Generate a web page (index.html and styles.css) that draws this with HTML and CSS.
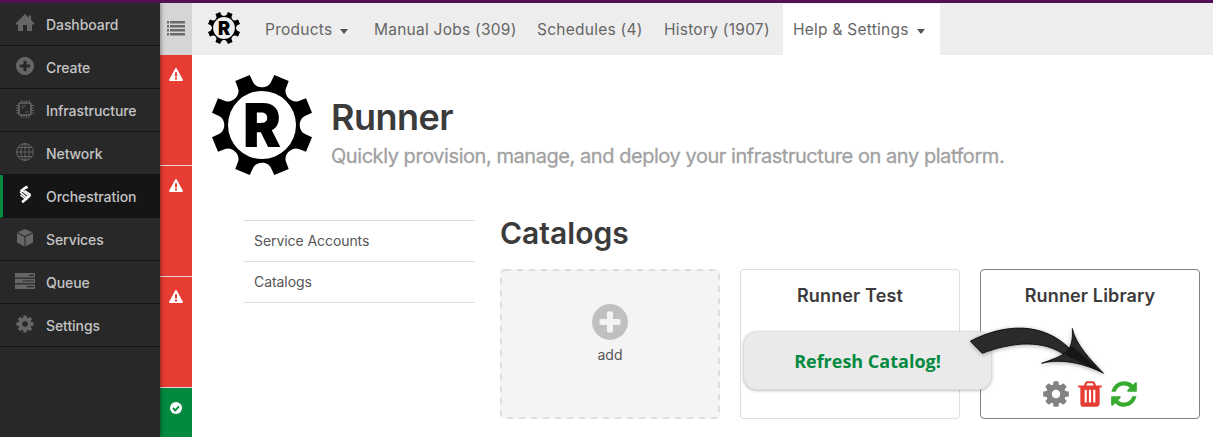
FILE: index.html
```html
<!DOCTYPE html>
<html lang="en">
<head>
<meta charset="utf-8">
<title>Runner</title>
<link rel="stylesheet" href="styles.css">
</head>
<body>
<svg class="defs" width="0" height="0">
  <symbol id="cog" viewBox="0 0 1792 1792"><path d="M1152 896q0-106-75-181t-181-75-181 75-75 181 75 181 181 75 181-75 75-181zm512-109v222q0 12-8 23t-20 13l-185 28q-19 54-39 91 35 50 107 138 10 12 10 25t-9 23q-27 37-99 108t-94 71q-12 0-26-9l-138-108q-44 23-91 38-16 136-29 186-7 28-36 28h-222q-14 0-24.5-8.5t-11.5-21.5l-28-184q-49-16-90-37l-141 107q-10 9-25 9-14 0-25-11-126-114-165-168-7-10-7-23 0-12 8-23 15-21 51-66.500t54-70.500q-27-50-41-99l-183-27q-13-2-21-12.500t-8-23.500v-222q0-12 8-23t19-13l186-28q14-46 39-92-40-57-107-138-10-12-10-24 0-10 9-23 26-36 98.500-107.500t94.500-71.500q13 0 26 10l138 107q44-23 91-38 16-136 29-186 7-28 36-28h222q14 0 24.500 8.500t11.500 21.500l28 184q49 16 90 37l142-107q9-9 24-9 13 0 25 10 129 119 165 170 7 8 7 22 0 12-8 23-15 21-51 66.500t-54 70.500q26 50 41 98l183 28q13 2 21 12.500t8 23.500z"/></symbol>
  <symbol id="plus" viewBox="128 128 1536 1536"><path d="M1344 960v-128q0-26-19-45t-45-19h-256v-256q0-26-19-45t-45-19h-128q-26 0-45 19t-19 45v256h-256q-26 0-45 19t-19 45v128q0 26 19 45t45 19h256v256q0 26 19 45t45 19h128q26 0 45-19t19-45v-256h256q26 0 45-19t19-45zm320-64q0 209-103 385.500t-279.500 279.500-385.500 103-385.500-103-279.500-279.500-103-385.500 103-385.500 279.500-279.500 385.500-103 385.500 103 279.500 279.500 103 385.500z"/></symbol>
  <symbol id="warn" viewBox="0 0 14 13"><path fill-rule="evenodd" d="M6.200.5q.8-1 1.600 0L13.900 11.800q.3 1.200-.9 1.200H1q-1.200 0-.9-1.200zM6 4.200v4.300h2V4.200zM6 9.500v1.900h2V9.500z"/></symbol>
  <symbol id="gear" viewBox="-50 -50 100 100">
    <path fill-rule="evenodd" d="M-12.300-50L-9-43C-6-36 6-36 9-43L12.300-50L26.700-44L24-36.800C21.200-29.700 29.700-21.200 36.800-24L44-26.700L50-12.300L43-9C36-6 36 6 43 9L50 12.300L44 26.700L36.800 24C29.700 21.200 21.200 29.700 24 36.800L26.700 44L12.300 50L9 43C6 36-6 36-9 43L-12.300 50L-26.700 44L-24 36.800C-21.200 29.700-29.700 21.200-36.800 24L-44 26.700L-50 12.300L-43 9C-36 6-36-6-43-9L-50-12.300L-44-26.700L-36.800-24C-29.700-21.200-21.200-29.700-24-36.800L-26.700-44ZM-34 0A34 34 0 1 0 34 0A34 34 0 1 0-34 0Z"/>
  </symbol>
</svg>
<div class="topline"></div>
<div class="app">
  <nav class="sidebar">
    <a class="side-item"><svg class="side-icon" viewBox="0 0 20 20"><path d="M10 1l3.700 3.700V2.500H16V7l3.500 3.500-.8.900H17V18h-5v-6H8v6H3v-6.600H1.300l-.8-.9z"/></svg>Dashboard</a>
    <a class="side-item"><svg class="side-icon" viewBox="-1 -1 20 20"><use href="#plus" width="18" height="18"/></svg>Create</a>
    <a class="side-item"><svg class="side-icon line" viewBox="0 0 20 20"><rect x="4" y="4" width="12" height="12" rx="1.500" stroke-width="1.600"/><path d="M6.500 1v3M9 1v3M11.500 1v3M14 1v3M6.500 16v3M9 16v3M11.500 16v3M14 16v3M1 6.500h3M1 9h3M1 11.500h3M1 14h3M16 6.500h3M16 9h3M16 11.500h3M16 14h3M6.500 7h4M6.500 9h2M10.500 13h3"/></svg>Infrastructure</a>
    <a class="side-item"><svg class="side-icon line" viewBox="0 0 20 20"><circle cx="10" cy="10" r="8.400"/><ellipse cx="10" cy="10" rx="4.200" ry="8.400"/><path d="M10 1.600v16.800M1.600 10h16.800M3 5.500h14M3 14.500h14"/></svg>Network</a>
    <a class="side-item active"><svg class="side-icon" viewBox="0 0 20 20"><g fill="none" stroke="#fff" stroke-linejoin="round"><path stroke-width="2.600" d="M12.600 1.800L9.500 3.200 5.600 6.600"/><path stroke-width="1.500" d="M5 7.200l7.500 6M7.200 5.800l7.200 5.400M9.500 5.600l6.200 4M5.500 10l5 4"/><path stroke-width="2.600" d="M15.300 9.800l-4.600 4.400-3.600 3"/></g></svg>Orchestration</a>
    <a class="side-item"><svg class="side-icon" viewBox="0 0 20 20"><path d="M10 1l7.600 3.200L10 8 2.400 4.200zM2 5.200l7.500 3.700v9.700L2 14.500zM18 5.200l-7.500 3.700v9.700l7.500-4.100z"/></svg>Services</a>
    <a class="side-item"><svg class="side-icon" viewBox="0 0 20 20"><path fill-rule="evenodd" d="M0 2h20v4.600H0zM14 3.700v1.200h5V3.700zM0 7.700h20v4.600H0zM7.500 9.400v1.200H19V9.400zM0 13.400h20V18H0zM11.500 15.100v1.200H19v-1.200z"/></svg>Queue</a>
    <a class="side-item"><svg class="side-icon"><use href="#cog"/></svg>Settings</a>
  </nav>
  <aside class="status">
    <div class="status-top"><svg width="18" height="15" viewBox="0 0 18 15"><path d="M0 0h2v2.500H0zM3 0h15v2.500H3zM0 4h2v2.500H0zM3 4h15v2.500H3zM0 8h2v2.500H0zM3 8h15v2.500H3zM0 12h2v2.500H0zM3 12h15v2.500H3z"/></svg></div>
    <div class="status-cell"><svg width="14" height="13"><use href="#warn"/></svg></div>
    <div class="status-cell"><svg width="14" height="13"><use href="#warn"/></svg></div>
    <div class="status-cell"><svg width="14" height="13"><use href="#warn"/></svg></div>
    <div class="status-cell ok"><svg width="12" height="12" viewBox="0 0 12 12"><circle cx="6" cy="6" r="6"/><path d="M3 6l2.200 2.300L9 4.400" fill="none" stroke="#048a40" stroke-width="1.900"/></svg></div>
  </aside>
  <main class="main">
    <header class="nav">
      <svg class="nav-logo" viewBox="0 0 100 100"><use href="#gear" width="100" height="100"/><text class="gear-letter" x="31" y="72" textLength="38" lengthAdjust="spacingAndGlyphs">R</text></svg>
      <a class="nav-item products">Products<i class="caret"></i></a>
      <a class="nav-item jobs">Manual Jobs (309)</a>
      <a class="nav-item schedules">Schedules (4)</a>
      <a class="nav-item history">History (1907)</a>
      <a class="nav-item current">Help &amp; Settings<i class="caret"></i></a>
    </header>
    <section class="hero">
      <svg class="hero-logo" viewBox="0 0 100 100"><use href="#gear" width="100" height="100"/><text class="gear-letter" x="31" y="72" textLength="38" lengthAdjust="spacingAndGlyphs">R</text></svg>
      <div>
        <h1>Runner</h1>
        <p class="tagline">Quickly provision, manage, and deploy your infrastructure on any platform.</p>
      </div>
    </section>
    <section class="content">
      <nav class="menu">
        <a>Service Accounts</a>
        <a>Catalogs</a>
      </nav>
      <div class="catalogs">
        <h2>Catalogs</h2>
        <div class="cards">
          <a class="card add"><svg class="dashes" width="220" height="150"><rect x="1" y="1" width="218" height="148" rx="4"/></svg><svg width="36" height="36"><use href="#plus"/></svg><span>add</span></a>
          <article class="card"><h3>Runner Test</h3></article>
          <article class="card selected">
            <h3>Runner Library</h3>
            <div class="actions">
              <svg class="cog"><use href="#cog"/></svg>
              <svg class="trash" viewBox="0 0 1792 1792"><path d="M704 1376v-704q0-14-9-23t-23-9h-64q-14 0-23 9t-9 23v704q0 14 9 23t23 9h64q14 0 23-9t9-23zm256 0v-704q0-14-9-23t-23-9h-64q-14 0-23 9t-9 23v704q0 14 9 23t23 9h64q14 0 23-9t9-23zm256 0v-704q0-14-9-23t-23-9h-64q-14 0-23 9t-9 23v704q0 14 9 23t23 9h64q14 0 23-9t9-23zm-544-992h448l-48-117q-7-9-17-11h-317q-10 2-17 11zm928 32v64q0 14-9 23t-23 9h-96v948q0 83-47 143.500t-113 60.500h-832q-66 0-113-58.500t-47-141.500v-952h-96q-14 0-23-9t-9-23v-64q0-14 9-23t23-9h309l70-167q15-37 54-63t79-26h320q40 0 79 26t54 63l70 167h309q14 0 23 9t9 23z"/></svg>
              <svg class="refresh" viewBox="0 0 1792 1792"><path d="M1639 1056q0 5-1 7-64 268-268 434.500t-478 166.500q-146 0-282.500-55t-243.500-157l-129 129q-19 19-45 19t-45-19-19-45v-448q0-26 19-45t45-19h448q26 0 45 19t19 45-19 45l-137 137q71 66 161 102t187 36q134 0 250-65t186-179q11-17 53-117 8-23 30-23h192q13 0 22.500 9.500t9.500 22.500zm25-800v448q0 26-19 45t-45 19h-448q-26 0-45-19t-19-45 19-45l138-138q-148-137-349-137-134 0-250 65t-186 179q-11 17-53 117-8 23-30 23h-199q-13 0-22.500-9.500t-9.500-22.500v-7q65-268 270-434.500t480-166.500q146 0 284 55.500t245 156.500l130-129q19-19 45-19t45 19 19 45z"/></svg>
            </div>
          </article>
        </div>
      </div>
    </section>
  </main>
</div>
<div class="callout">Refresh Catalog!</div>
<svg class="arrow" viewBox="960 320 150 60" width="150" height="60">
  <path d="M970.300 341.200C1003 324 1044 320 1073 352L1066 356C1044 339 1012 342 982.300 353.300Z"/>
  <path d="M1072.300 328.500C1076 345 1090 359 1103.500 373.300C1086 364 1063 358 1041.700 363.300C1051 360 1060 357 1066.500 352C1071 347 1073 341 1072.300 328.500Z"/>
  <path class="fold" d="M1072 346L1103.500 373.300L1065 355Z"/>
</svg>
</body>
</html>
```
FILE: styles.css
```css
* { box-sizing: border-box; }
body { margin: 0; width: 1213px; height: 437px; overflow: hidden; background: #fff; color: #3b3b3b; font-family: Inter, "Liberation Sans", sans-serif; }
h1, h2, h3, p { margin: 0; white-space: nowrap; }
svg { display: block; flex: none; }
.defs { position: absolute; }
.topline { height: 3px; background: #550f55; }
.app { display: flex; height: 434px; }

.sidebar { width: 160px; flex: none; background: #282828; position: relative; box-shadow: 0 0 5px rgba(0,0,0,.55); clip-path: inset(0 -8px 0 0); }
.side-item { display: flex; align-items: center; height: 43px; padding: 1px 0 0 15px; gap: 11px; border-bottom: 1px solid #141414; color: #c4c4c4; font-size: 14px; font-weight: 500; letter-spacing: -.08px; }
.side-item.active { background: #151515; border-left: 3px solid #048a40; padding-left: 12px; }
.side-icon { width: 20px; height: 20px; fill: #666; margin-top: -3px; }
.side-icon.line { fill: none; stroke: #666; stroke-width: .9; }

.status { width: 32px; flex: none; }
.status-top { height: 52px; background: #d5d5d5; display: flex; justify-content: center; padding-top: 18px; fill: #6b6b6b; }
.status-cell { height: 111px; background: #e63c33; border-bottom: 1px solid #e8d6d6; display: flex; justify-content: center; align-items: flex-start; padding-top: 13px; fill: #fff; }
.status-cell.ok { height: 49px; background: #048a40; border: 0; padding-top: 14px; }

.main { flex: 1; }
.nav { height: 52px; background: #ededed; display: flex; padding-left: 16px; }
.nav-logo { width: 32px; height: 32px; margin: 9px 25px 0 0; }
.gear-letter { font-family: Inter, sans-serif; font-weight: 900; font-size: 60px; }
.nav-item { flex: none; color: #666; font-size: 15.5px; line-height: 53px; letter-spacing: .25px; white-space: nowrap; }
.products { width: 109px; }
.jobs { width: 163px; }
.schedules { width: 127px; }
.history { width: 119px; }
.current { background: #fff; width: 157px; padding-left: 10px; margin-top: 1px; line-height: 51px; }
.caret { display: inline-block; border: 4.500px solid transparent; border-top: 5px solid #555; border-bottom: 0; margin-left: 8px; vertical-align: 1px; }

.hero { display: flex; padding: 20px 0 0 20px; height: 165px; gap: 19px; }
.hero-logo { width: 100px; height: 100px; }
h1 { font-size: 36px; font-weight: 600; line-height: 44px; margin-top: 20px; letter-spacing: -.5px; }
.tagline { font-size: 20px; line-height: 24px; color: #a1a1a1; margin-top: 5px; letter-spacing: -.445px; -webkit-text-stroke: .3px #a1a1a1; }

.content { display: flex; padding-left: 52px; gap: 25px; }
.menu { width: 231px; border-top: 1px solid #dedede; height: 83px; }
.menu a { display: block; height: 41px; border-bottom: 1px solid #dedede; padding-left: 10px; line-height: 40px; font-size: 14px; letter-spacing: -.07px; color: #555; }
h2 { font-size: 30px; font-weight: 600; line-height: 36px; margin-top: -5px; }
.cards { display: flex; gap: 20px; margin-top: 18px; }
.card { position: relative; width: 220px; height: 150px; border: 1px solid #dedede; border-radius: 4px; display: flex; flex-direction: column; align-items: center; padding-top: 14px; }
.add { border: 0; background: #f4f4f4; padding-top: 35px; fill: #c0c0c0; color: #555; font-size: 14px; }
.add span { line-height: 18px; margin-top: 6px; }
.dashes { position: absolute; top: 0; left: 0; fill: none; stroke: #dedede; stroke-width: 2; stroke-dasharray: 6 6; }
.selected { border-color: #808080; }
h3 { font-size: 18px; font-weight: 600; line-height: 24px; letter-spacing: .15px; }
.actions { display: flex; gap: 4px; margin-top: 71px; }
.actions svg { width: 30px; height: 30px; }
.cog { fill: #828282; }
.trash { fill: #e63c33; }
.refresh { fill: #36ab30; }

.callout { position: absolute; left: 743px; top: 331px; width: 249px; height: 59px; border: 1px solid #dedede; border-radius: 14px; background: #eaeaea; box-shadow: 0 1px 3px rgba(0,0,0,.25); text-align: center; font: 700 18px/58px "Open Sans", sans-serif; color: #048a40; }
.arrow { position: absolute; left: 960px; top: 320px; fill: #2a2a2a; stroke: #000; stroke-width: .8; filter: drop-shadow(0 1px 2px rgba(0,0,0,.35)); }
.fold { fill: #161616; stroke: none; }
```
